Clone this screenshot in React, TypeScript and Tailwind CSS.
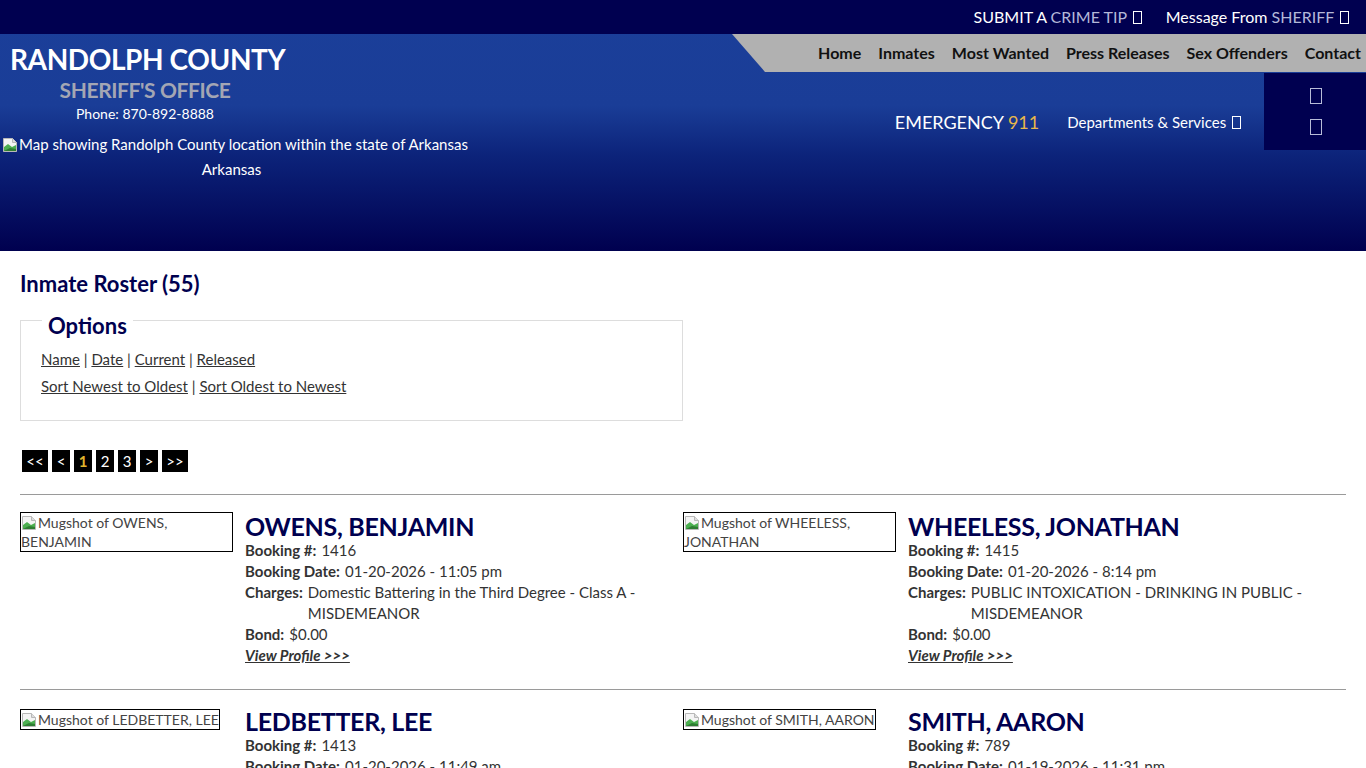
import React from 'react';

const font = "font-['Lato','Liberation_Sans',sans-serif]";

// the little square a missing icon-font glyph leaves behind
const Tofu: React.FC<{ className?: string }> = ({ className = '' }) => (
  <span className={`inline-block w-[9px] h-[13px] border border-current align-[-1px] ml-[2px] ${className}`} />
);

const BrokenImg: React.FC = () => (
  <svg viewBox="0 0 16 16" className="inline-block w-4 h-4 align-[-3px] mr-[1px]">
    <path d="M1.5 1.5h9l4 4v9h-13z" fill="#f4f4f4" stroke="#b8b8b8" />
    <path d="M2 14 L2 10 L6 7 L10 10 L14 8 L14 14 Z" fill="#4caf50" />
    <path d="M2 14 L8 11 L14 12 L14 14 Z" fill="#2e7d32" />
    <path d="M10.5 1.5v4h4" fill="#ddd" stroke="#b8b8b8" />
  </svg>
);

interface Inmate {
  name: string;
  booking: string;
  date: string;
  charges?: string;
  bond?: string;
  wide?: boolean;
}

const inmates: Inmate[] = [
  {
    name: 'OWENS, BENJAMIN',
    booking: '1416',
    date: '01-20-2026 - 11:05 pm',
    charges: 'Domestic Battering in the Third Degree - Class A - MISDEMEANOR',
    bond: '$0.00',
    wide: true,
  },
  {
    name: 'WHEELESS, JONATHAN',
    booking: '1415',
    date: '01-20-2026 - 8:14 pm',
    charges: 'PUBLIC INTOXICATION - DRINKING IN PUBLIC - MISDEMEANOR',
    bond: '$0.00',
    wide: true,
  },
  { name: 'LEDBETTER, LEE', booking: '1413', date: '01-20-2026 - 11:49 am' },
  { name: 'SMITH, AARON', booking: '789', date: '01-19-2026 - 11:31 pm' },
];

const InmateCard: React.FC<{ inmate: Inmate }> = ({ inmate }) => (
  <div className="flex items-start gap-3 pt-[17px] pb-[23px]">
    <div className="w-[213px] shrink-0">
      <span
        className={`inline-block border border-black text-[14px] leading-[19px] text-[#444] ${
          inmate.wide ? 'w-[213px] h-[40px]' : ''
        }`}
      >
        <BrokenImg />
        Mugshot of {inmate.name}
      </span>
    </div>
    <div className="flex-1 text-[15px] leading-[21px] text-[#333] pr-10">
      <h3 className="text-[25px] leading-[28px] font-bold text-[#00004f] tracking-[-0.3px]">{inmate.name}</h3>
      <div className="flex gap-[5px]">
        <span className="font-bold">Booking #:</span>
        <span>{inmate.booking}</span>
      </div>
      <div className="flex gap-[5px]">
        <span className="font-bold">Booking Date:</span>
        <span>{inmate.date}</span>
      </div>
      {inmate.charges && (
        <div className="flex gap-[5px]">
          <span className="font-bold shrink-0">Charges:</span>
          <span className="max-w-[340px]">{inmate.charges}</span>
        </div>
      )}
      {inmate.bond && (
        <div className="flex gap-[5px]">
          <span className="font-bold">Bond:</span>
          <span>{inmate.bond}</span>
        </div>
      )}
      {inmate.bond && (
        <a href="#" className="font-bold italic underline text-[#333]">
          View Profile &gt;&gt;&gt;
        </a>
      )}
    </div>
  </div>
);

export default function App() {
  const pages = ['<<', '<', '1', '2', '3', '>', '>>'];

  return (
    <div className={`${font} bg-white min-h-screen`}>
      {/* Header */}
      <header className="h-[251px] bg-[linear-gradient(to_bottom,#1b3f9a_0%,#1a3d97_42%,#0c237a_62%,#00004f_100%)]">
        <div className="h-[34px] bg-[#000050] flex justify-end items-center gap-[24px] pr-[17px] text-[16px] text-white">
          <span>
            SUBMIT A <span className="text-[#b4b8d8]">CRIME TIP</span> <Tofu />
          </span>
          <span>
            Message From <span className="text-[#b4b8d8]">SHERIFF</span> <Tofu />
          </span>
        </div>

        <div className="flex justify-between">
          {/* Logo block */}
          <div className="w-[463px] pt-[8px]">
            <div className="w-[290px] text-center">
              <h1 className="text-[28px] leading-[34px] font-bold text-white text-left ml-[10px] whitespace-nowrap tracking-[-0.4px]">
                RANDOLPH COUNTY
              </h1>
              <div className="text-[21px] leading-[28px] font-bold text-[#a3a6b4] tracking-[-0.4px]">SHERIFF'S OFFICE</div>
              <div className="text-[14px] leading-[20px] text-white">Phone: 870-892-8888</div>
            </div>
            <div className="mt-[10px] pl-[2px] text-[15px] leading-[20px] text-white whitespace-nowrap">
              <BrokenImg />
              Map showing Randolph County location within the state of Arkansas
            </div>
            <div className="mt-[5px] text-center text-[15px] leading-[20px] text-white">Arkansas</div>
          </div>

          {/* Nav block */}
          <div className="flex flex-col items-end">
            <nav className="w-[634px] h-[38px] bg-[#b1b1b1] [clip-path:polygon(0_0,100%_0,100%_100%,33px_100%)] flex justify-end items-center gap-[17px] pr-[5px] text-[16px] font-bold text-[#111]">
              <a href="#">Home</a>
              <a href="#">Inmates</a>
              <a href="#">Most Wanted</a>
              <a href="#">Press Releases</a>
              <a href="#">Sex Offenders</a>
              <a href="#">Contact</a>
            </nav>
            <div className="flex items-start mt-[1px]">
              <div className="flex items-center h-[77px] pt-[21px] gap-[28px] pr-[23px]">
                <span className="text-[18px] text-white">
                  EMERGENCY <span className="text-[#e8b84a]">911</span>
                </span>
                <span className="text-[15px] text-white">
                  Departments &amp; Services <Tofu />
                </span>
              </div>
              <div className="w-[102px] h-[77px] bg-[#000050] flex flex-col items-center justify-center gap-[15px] text-[#b8bcd8]">
                <Tofu className="w-[12px] h-[16px]" />
                <Tofu className="w-[12px] h-[16px]" />
              </div>
            </div>
          </div>
        </div>
      </header>

      {/* Content */}
      <main className="px-5 pt-[20px]">
        <h2 className="text-[22px] leading-[26px] font-bold text-[#00004f]">Inmate Roster (55)</h2>

        <fieldset className="mt-[2px] w-[663px] border border-[#ddd] px-5 pb-[20px]">
          <legend className="text-[22px] font-bold text-[#00004f] px-[6px] pt-[10px] ml-[1px]">Options</legend>
          <div className="text-[15px] leading-[27px] text-[#333] mt-[4px]">
            <div>
              <a href="#" className="underline">Name</a> | <a href="#" className="underline">Date</a> |{' '}
              <a href="#" className="underline">Current</a> | <a href="#" className="underline">Released</a>
            </div>
            <div>
              <a href="#" className="underline">Sort Newest to Oldest</a> |{' '}
              <a href="#" className="underline">Sort Oldest to Newest</a>
            </div>
          </div>
        </fieldset>

        <div className="flex gap-[4px] mt-[29px] ml-[2px]">
          {pages.map((p) => (
            <span
              key={p}
              className={`bg-black h-[22px] leading-[22px] text-[15px] text-center ${
                p.length === 2 ? 'w-[26px]' : 'w-[18px]'
              } ${p === '1' ? 'text-[#e0b52c] font-bold' : 'text-white'}`}
            >
              {p}
            </span>
          ))}
        </div>

        <div className="mt-[22px] grid grid-cols-2">
          {inmates.map((inmate) => (
            <div key={inmate.name} className="border-t border-[#9a9a9a]">
              <InmateCard inmate={inmate} />
            </div>
          ))}
        </div>
      </main>
    </div>
  );
}
